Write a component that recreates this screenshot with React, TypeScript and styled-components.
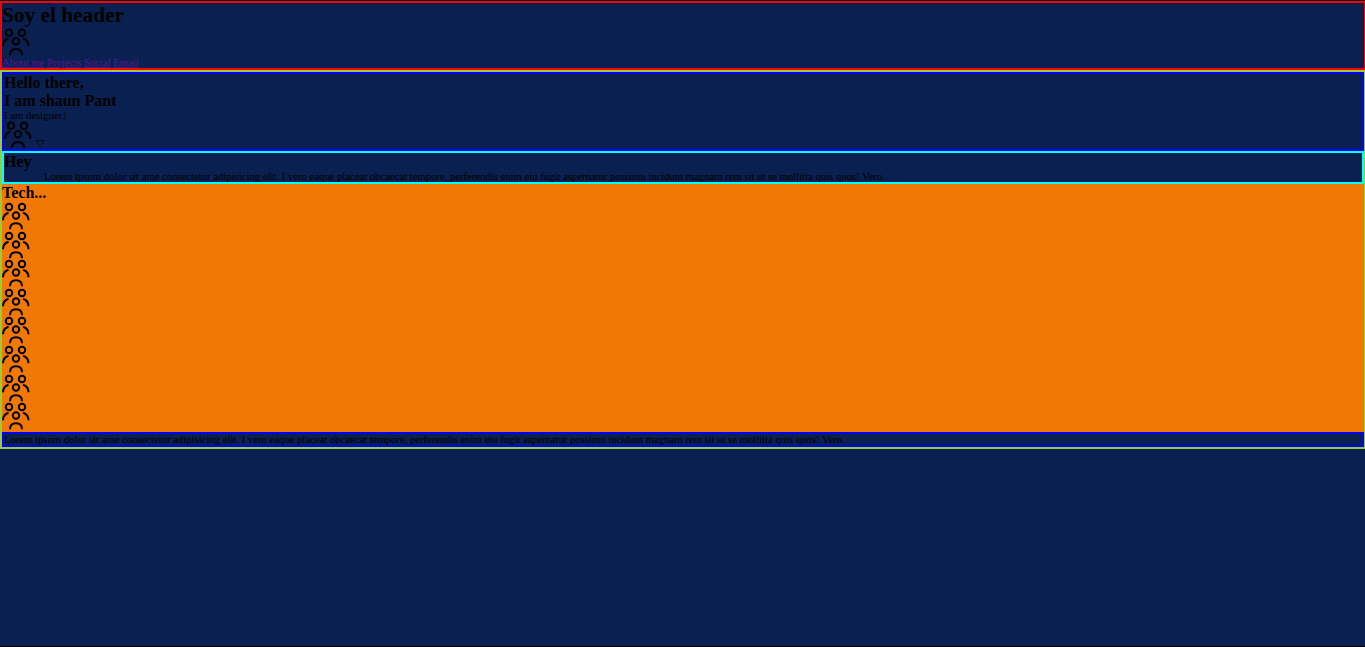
import styled, { createGlobalStyle } from "styled-components";

const GlobalStyle = createGlobalStyle`
    html, body {
        margin: 0;
        padding: 0;
        background-color: #092050;
        overflow: hidden;
    }
    body {
        font-family: "Liberation Serif", "Times New Roman", serif;
        font-size: 10.67px;
        color: #000;
    }
`;

const Page = styled.div`
    width: 1366px;
    height: 647px;
    box-sizing: border-box;
    border-top: 1px solid #000;
    border-bottom: 1px solid #000;
`;

const Header = styled.header`
    border: 2px solid red;
`;

const Logo = styled.h1`
    margin: 0;
    font-size: 21.33px;
`;

const Nav = styled.nav`
    line-height: 12px;
`;

const NavLink = styled.a`
    color: #551a8b;
    text-decoration: underline;
`;

const Wrapper = styled.div`
    border: 2px solid yellowgreen;
`;

const Hero = styled.section`
    border: 2px solid blue;
`;

const SectionTitle = styled.h2`
    margin: 0;
    font-size: 16px;
`;

const Text = styled.p<{ $indent?: number }>`
    margin: 0;
    padding-left: ${(props) => props.$indent || 0}px;
    line-height: 11px;
`;

const HeroRow = styled.div`
    display: flex;
    align-items: flex-end;
`;

const Caret = styled.span`
    line-height: 12px;
    margin-left: 4px;
`;

const About = styled.section`
    border: 2px solid cyan;
`;

const Tech = styled.section`
    background-color: #f27805;
    padding-bottom: 1.2px;
`;

const TechList = styled.div`
    display: flex;
    flex-direction: column;
`;

const Footer = styled.footer`
    border: 2px solid blue;
`;

const IconBox = styled.svg`
    display: block;
    width: 28px;
    flex: none;
`;

const Icon = ({ height = 28.6 }: { height?: number }) => (
    <IconBox height={height} viewBox="0 0 28 28" fill="none" stroke="#000" strokeWidth="2">
        <circle cx="7" cy="4.700" r="3.200" />
        <circle cx="20" cy="4.700" r="3.200" />
        <circle cx="14" cy="13.200" r="3.200" />
        <path d="M1 18c0-3.500 2.300-6.500 5.500-7.500" />
        <path d="M26.500 18c0-3.500-2.300-6.500-5.500-7.500" />
        <path d="M8 27c0-4 2.500-6 6-6s6 2 6 6" />
    </IconBox>
);

const lorem = "Lorem ipsum dolor sit ame consectetur adipisicing elit. I vero eaque placeat obcaecat tempore, perferendis enim eiu fugit aspernatur possimu incidunt magnam rem sit ut se mollitia quis quos! Vero.";

const App = () => {
    return (
        <Page>
            <GlobalStyle />
            <Header>
                <Logo>Soy el header</Logo>
                <Icon height={28} />
                <Nav>
                    <NavLink href="#">About me</NavLink> <NavLink href="#">Projects</NavLink> <NavLink href="#">Social</NavLink> <NavLink href="#">Email</NavLink>
                </Nav>
            </Header>
            <Wrapper>
                <Hero>
                    <SectionTitle>Hello there,<br />I am shaun Pant</SectionTitle>
                    <Text>I am designer.|</Text>
                    <HeroRow>
                        <Icon height={28} />
                        <Caret>▽</Caret>
                    </HeroRow>
                </Hero>
                <About>
                    <SectionTitle>Hey</SectionTitle>
                    <Text $indent={40}>{lorem}</Text>
                </About>
                <Tech>
                    <SectionTitle>Tech...</SectionTitle>
                    <TechList>
                        {Array.from({ length: 8 }).map((_, i) => (
                            <Icon key={i} />
                        ))}
                    </TechList>
                </Tech>
                <Footer>
                    <Text>{lorem}</Text>
                </Footer>
            </Wrapper>
        </Page>
    );
};

export default App;
